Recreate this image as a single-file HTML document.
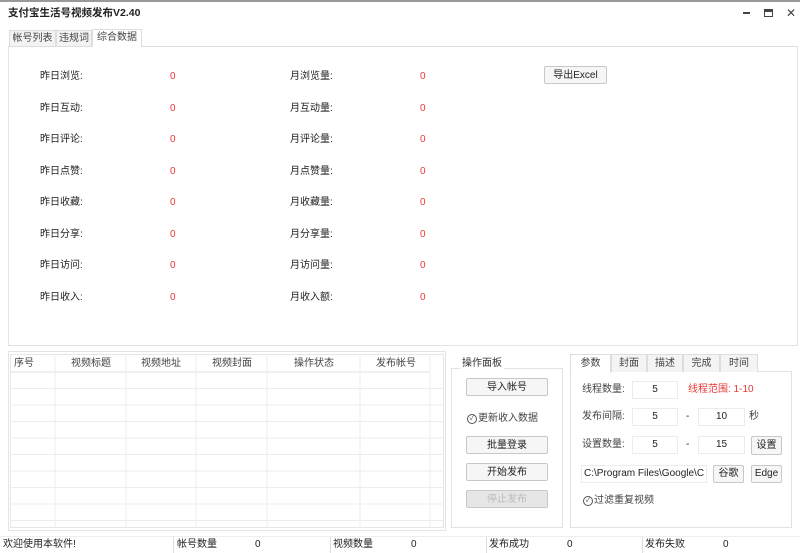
<!DOCTYPE html>
<html><head><meta charset="utf-8"><style>
*{margin:0;padding:0;box-sizing:border-box}
body{width:800px;height:553px;background:#fff;font-family:"Liberation Sans","Noto Sans CJK SC",sans-serif;font-size:10px;line-height:12px;color:#222;position:relative;overflow:hidden}
.a{position:absolute;white-space:nowrap;line-height:12px}
.btn{position:absolute;border:1px solid #c8c8c8;background:#f6f6f6;text-align:center;font-size:10px;border-radius:2px}
.inp{position:absolute;border:1px solid #ececec;background:#fff;text-align:center;font-size:10px}
.red{color:#e53935}
.tab{position:absolute;border:1px solid #ddd;border-bottom:none;background:#f4f4f4;text-align:center;font-size:10px;top:354px;height:18px;line-height:17px;color:#444}
.ck{display:inline-block;width:10px;height:10px;border:1px solid #555;border-radius:50%;font-size:7px;line-height:8px;text-align:center;vertical-align:top;margin-top:1px;margin-right:1px}
</style></head><body>
<div class="a" style="left:0;top:0;width:800px;height:2px;background:#999"></div>
<div class="a" style="left:8px;top:7px;font-weight:bold;font-size:10.5px">支付宝生活号视频发布V2.40</div>
<div class="a" style="left:743px;top:12px;width:7px;height:1.5px;background:#444"></div>
<div class="a" style="left:764px;top:9px;width:9px;height:8px;border:1.5px solid #444;border-top-width:3px"></div>
<div class="a" style="left:786px;top:7px;font-size:12px;color:#444">✕</div>
<div class="a" style="left:9px;top:30px;width:47px;height:17px;border:1px solid #ddd;background:#f3f3f3;text-align:center;line-height:15px;color:#444">帐号列表</div>
<div class="a" style="left:56px;top:30px;width:36px;height:17px;border:1px solid #ddd;background:#f3f3f3;text-align:center;line-height:15px;color:#444">违规词</div>
<div class="a" style="left:92px;top:29px;width:50px;height:18px;border:1px solid #ddd;border-bottom:none;background:#fff;text-align:center;line-height:16px;color:#444">综合数据</div>
<div class="a" style="left:8px;top:46px;width:790px;height:300px;border:1px solid #e4e4e4;border-top:1px solid #ddd"></div>
<div class="a" style="left:93px;top:46px;width:48px;height:1px;background:#fff"></div>

<div class="a" style="left:40px;top:61px;line-height:31.5px">昨日浏览:<br>昨日互动:<br>昨日评论:<br>昨日点赞:<br>昨日收藏:<br>昨日分享:<br>昨日访问:<br>昨日收入:</div>
<div class="a red" style="left:170px;top:61px;line-height:31.5px">0<br>0<br>0<br>0<br>0<br>0<br>0<br>0</div>
<div class="a" style="left:290px;top:61px;line-height:31.5px">月浏览量:<br>月互动量:<br>月评论量:<br>月点赞量:<br>月收藏量:<br>月分享量:<br>月访问量:<br>月收入额:</div>
<div class="a red" style="left:420px;top:61px;line-height:31.5px">0<br>0<br>0<br>0<br>0<br>0<br>0<br>0</div>
<div class="btn" style="left:544px;top:66px;width:63px;height:18px;line-height:17px">导出Excel</div>

<div class="a" style="left:8px;top:351px;width:438px;height:180px;border:1px solid #e4e4e4"></div>
<svg class="a" style="left:10px;top:354px" width="434" height="174">
<rect x="0.5" y="0.5" width="433" height="173" fill="#fff" stroke="#e6e6e6"/>
<line x1="0" y1="18" x2="420" y2="18" stroke="#e2e2e2"/>
<g stroke="#ececec">
<line x1="45" y1="0" x2="45" y2="174"/><line x1="116" y1="0" x2="116" y2="174"/><line x1="186" y1="0" x2="186" y2="174"/><line x1="257" y1="0" x2="257" y2="174"/><line x1="350" y1="0" x2="350" y2="174"/><line x1="420" y1="0" x2="420" y2="174"/>
<line x1="0" y1="34.5" x2="434" y2="34.5"/><line x1="0" y1="51" x2="434" y2="51"/><line x1="0" y1="67.5" x2="434" y2="67.5"/><line x1="0" y1="84" x2="434" y2="84"/><line x1="0" y1="100.5" x2="434" y2="100.5"/><line x1="0" y1="117" x2="434" y2="117"/><line x1="0" y1="133.5" x2="434" y2="133.5"/><line x1="0" y1="150" x2="434" y2="150"/><line x1="0" y1="166.5" x2="434" y2="166.5"/>
</g></svg>
<div class="a" style="left:14px;top:358px;color:#444">序号</div>
<div class="a" style="left:71px;top:358px;color:#444">视频标题</div>
<div class="a" style="left:141px;top:358px;color:#444">视频地址</div>
<div class="a" style="left:212px;top:358px;color:#444">视频封面</div>
<div class="a" style="left:294px;top:358px;color:#444">操作状态</div>
<div class="a" style="left:376px;top:358px;color:#444">发布帐号</div>

<div class="a" style="left:451px;top:368px;width:112px;height:160px;border:1px solid #e2e2e2"></div>
<div class="a" style="left:460px;top:358px;background:#fff;padding:0 2px;color:#333">操作面板</div>
<div class="btn" style="left:466px;top:378px;width:82px;height:18px;line-height:17px">导入帐号</div>
<div class="a" style="left:467px;top:413px;color:#444"><span class="ck">✓</span>更新收入数据</div>
<div class="btn" style="left:466px;top:436px;width:82px;height:18px;line-height:17px">批量登录</div>
<div class="btn" style="left:466px;top:463px;width:82px;height:18px;line-height:17px">开始发布</div>
<div class="btn" style="left:466px;top:490px;width:82px;height:18px;line-height:17px;background:#e6e6e6;color:#bbb">停止发布</div>

<div class="a" style="left:570px;top:371px;width:222px;height:157px;border:1px solid #e2e2e2"></div>
<div class="tab" style="left:570px;width:41px;background:#fff;height:19px">参数</div>
<div class="tab" style="left:611px;width:36px">封面</div>
<div class="tab" style="left:647px;width:36px">描述</div>
<div class="tab" style="left:683px;width:37px">完成</div>
<div class="tab" style="left:720px;width:38px">时间</div>
<div class="a" style="left:582px;top:384px;color:#444">线程数量:</div>
<div class="inp" style="left:632px;top:381px;width:46px;height:18px;line-height:16px">5</div>
<div class="a red" style="left:688px;top:384px">线程范围: 1-10</div>
<div class="a" style="left:582px;top:411px;color:#444">发布间隔:</div>
<div class="inp" style="left:632px;top:408px;width:46px;height:18px;line-height:16px">5</div>
<div class="a" style="left:686px;top:411px">-</div>
<div class="inp" style="left:698px;top:408px;width:47px;height:18px;line-height:16px">10</div>
<div class="a" style="left:749px;top:411px;color:#444">秒</div>
<div class="a" style="left:582px;top:439px;color:#444">设置数量:</div>
<div class="inp" style="left:632px;top:436px;width:46px;height:18px;line-height:16px">5</div>
<div class="a" style="left:686px;top:439px">-</div>
<div class="inp" style="left:698px;top:436px;width:47px;height:18px;line-height:16px">15</div>
<div class="btn" style="left:751px;top:436px;width:31px;height:19px;line-height:17px">设置</div>
<div class="inp" style="left:581px;top:465px;width:126px;height:18px;line-height:16px;text-align:left;padding-left:2px;overflow:hidden">C:\Program Files\Google\C</div>
<div class="btn" style="left:713px;top:465px;width:31px;height:18px;line-height:16px">谷歌</div>
<div class="btn" style="left:751px;top:465px;width:31px;height:18px;line-height:16px">Edge</div>
<div class="a" style="left:583px;top:495px;color:#444"><span class="ck">✓</span>过滤重复视频</div>

<div class="a" style="left:0;top:536px;width:800px;height:17px;background:#fff;border-top:1px solid #eee"></div>
<div class="a" style="left:3px;top:539px">欢迎使用本软件!</div>
<div class="a" style="left:173px;top:537px;width:1px;height:16px;background:#ddd"></div>
<div class="a" style="left:177px;top:539px">帐号数量</div><div class="a" style="left:255px;top:539px">0</div>
<div class="a" style="left:330px;top:537px;width:1px;height:16px;background:#ddd"></div>
<div class="a" style="left:333px;top:539px">视频数量</div><div class="a" style="left:411px;top:539px">0</div>
<div class="a" style="left:486px;top:537px;width:1px;height:16px;background:#ddd"></div>
<div class="a" style="left:489px;top:539px">发布成功</div><div class="a" style="left:567px;top:539px">0</div>
<div class="a" style="left:642px;top:537px;width:1px;height:16px;background:#ddd"></div>
<div class="a" style="left:645px;top:539px">发布失败</div><div class="a" style="left:723px;top:539px">0</div>
</body></html>
